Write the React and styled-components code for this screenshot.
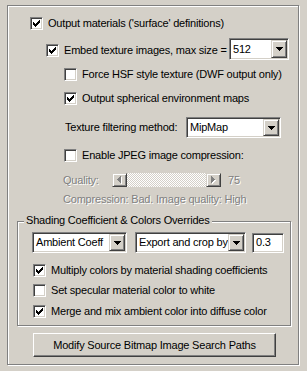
import React from 'react';
import styled, { createGlobalStyle } from 'styled-components';

const Global = createGlobalStyle`
  html, body { margin: 0; padding: 0; background: #d4d0c8; }
  body {
    font-family: "Liberation Sans", Arial, sans-serif;
    font-size: 11px;
    letter-spacing: -0.2px;
    color: #000;
    width: 307px;
    height: 371px;
    overflow: hidden;
  }
  * { box-sizing: border-box; }
`;

const Frame = styled.div`
  margin: 5px 0 0 7px;
  width: 292px;
  height: 360px;
  border: 1px solid #808080;
  box-shadow: inset 1px 1px 0 #fff, 1px 1px 0 #fff;
  display: flex;
  flex-direction: column;
`;

const Row = styled.div`
  display: flex;
  align-items: center;
  flex-shrink: 0;
  height: ${(p) => p.$h}px;
  margin-top: ${(p) => p.$mt}px;
  padding-left: ${(p) => p.$indent}px;
  padding-right: ${(p) => p.$pr || 0}px;
  white-space: nowrap;
  line-height: 13px;
`;

const CheckLabel = styled.label`
  display: flex;
  align-items: center;
  gap: 5px;
  height: 13px;
  line-height: 13px;
  white-space: nowrap;
  align-self: ${(p) => (p.$mt !== undefined ? 'flex-start' : 'center')};
  margin-top: ${(p) => p.$mt || 0}px;
`;

const Box = styled.span`
  width: 13px;
  height: 13px;
  flex-shrink: 0;
  background: #fff;
  border: 1px solid;
  border-color: #808080 #fff #fff #808080;
  box-shadow: inset 1px 1px 0 #404040, inset -1px -1px 0 #d4d0c8;
  padding: 2px 0 0 2px;
  display: flex;
  align-items: flex-start;
  svg { display: block; }
`;

const Text = styled.span`
  color: ${(p) => (p.$disabled ? '#808080' : '#000')};
  text-shadow: ${(p) => (p.$disabled ? '1px 1px 0 #fff' : 'none')};
  width: ${(p) => (p.$w ? `${p.$w}px` : 'auto')};
  margin-left: ${(p) => p.$ml || 0}px;
  flex-shrink: 0;
`;

const Combo = styled.div`
  width: ${(p) => p.$w}px;
  height: ${(p) => p.$h || 21}px;
  margin-left: ${(p) => (p.$auto ? 'auto' : `${p.$ml || 0}px`)};
  flex-shrink: 0;
  background: #fff;
  border: 1px solid;
  border-color: #808080 #fff #fff #808080;
  box-shadow: inset 1px 1px 0 #404040, inset -1px -1px 0 #d4d0c8;
  padding: 1px;
  display: flex;
  align-items: stretch;
`;

const ComboValue = styled.span`
  flex: 1;
  overflow: hidden;
  padding-left: 2px;
  display: flex;
  align-items: center;
`;

const RaisedBtn = styled.span`
  width: ${(p) => p.$w || 16}px;
  flex-shrink: 0;
  background: #d4d0c8;
  border: 1px solid;
  border-color: #d4d0c8 #404040 #404040 #d4d0c8;
  box-shadow: inset 1px 1px 0 #fff, inset -1px -1px 0 #808080;
  display: flex;
  align-items: center;
  justify-content: center;
  svg { display: block; }
`;

const Scroll = styled.div`
  display: flex;
  width: 109px;
  height: 14px;
  flex-shrink: 0;
`;

const Track = styled.span`
  flex: 1;
  background-color: #fff;
  background-image: conic-gradient(#fff 25%, #d4d0c8 0 50%, #fff 0 75%, #d4d0c8 0);
  background-size: 2px 2px;
`;

const Group = styled.div`
  position: relative;
  flex-shrink: 0;
  margin: 15px 0 0 9px;
  width: 274px;
  height: 105px;
  border: 1px solid #808080;
  box-shadow: inset 1px 1px 0 #fff, 1px 1px 0 #fff;
  display: flex;
  flex-direction: column;
  padding-top: 10px;
`;

const GroupTitle = styled.span`
  position: absolute;
  left: 6px;
  top: -8px;
  padding: 0 2px;
  line-height: 13px;
  background: #d4d0c8;
  white-space: nowrap;
`;

const PushButton = styled.button`
  flex-shrink: 0;
  margin: 7px 0 0 25px;
  width: 243px;
  height: 24px;
  padding: 0;
  font: inherit;
  letter-spacing: inherit;
  color: #000;
  background: #d4d0c8;
  border: 1px solid;
  border-color: #fff #404040 #404040 #fff;
  box-shadow: inset -1px -1px 0 #808080, inset 1px 1px 0 #d4d0c8;
  white-space: nowrap;
`;

const CheckMark = () => (
  <svg width="7" height="7" viewBox="0 0 7 7" shapeRendering="crispEdges">
    <path
      fill="#000"
      d="M6 0h1v1h-1z M5 1h2v1h-2z M0 2h1v1h-1z M4 2h3v1h-3z M0 3h2v1h-2z M3 3h3v1h-3z M0 4h5v1h-5z M1 5h3v1h-3z M2 6h1v1h-1z"
    />
  </svg>
);

const DownArrow = () => (
  <svg width="7" height="4" viewBox="0 0 7 4" shapeRendering="crispEdges">
    <path fill="#000" d="M0 0h7v1h-7z M1 1h5v1h-5z M2 2h3v1h-3z M3 3h1v1h-1z" />
  </svg>
);

const SideArrow = ({ dir }) => {
  const d =
    dir === 'left'
      ? 'M0 3h1v1h-1z M1 2h1v3h-1z M2 1h1v5h-1z M3 0h1v7h-1z'
      : 'M0 0h1v7h-1z M1 1h1v5h-1z M2 2h1v3h-1z M3 3h1v1h-1z';
  return (
    <svg width="5" height="8" viewBox="0 0 5 8" shapeRendering="crispEdges">
      <g transform="translate(1 1)">
        <path fill="#fff" d={d} />
      </g>
      <path fill="#808080" d={d} />
    </svg>
  );
};

const Check = ({ checked, children, mt }) => (
  <CheckLabel $mt={mt}>
    <Box>{checked && <CheckMark />}</Box>
    <Text>{children}</Text>
  </CheckLabel>
);

const Dropdown = ({ w, h, value, auto, ml }) => (
  <Combo $w={w} $h={h} $auto={auto} $ml={ml}>
    <ComboValue>{value}</ComboValue>
    <RaisedBtn>
      <DownArrow />
    </RaisedBtn>
  </Combo>
);

export default function App() {
  return (
    <>
      <Global />
      <Frame>
        <Row $h={13} $mt={11} $indent={22}>
          <Check checked>Output materials ('surface' definitions)</Check>
        </Row>
        <Row $h={22} $mt={8} $indent={38} $pr={9}>
          <Check checked mt={6}>Embed texture images, max size =</Check>
          <Dropdown w={60} h={22} value="512" auto />
        </Row>
        <Row $h={13} $mt={8} $indent={56}>
          <Check>Force HSF style texture (DWF output only)</Check>
        </Row>
        <Row $h={13} $mt={11} $indent={56}>
          <Check checked>Output spherical environment maps</Check>
        </Row>
        <Row $h={21} $mt={12} $indent={57} $pr={17}>
          <Text>Texture filtering method:</Text>
          <Dropdown w={95} h={21} value="MipMap" auto />
        </Row>
        <Row $h={13} $mt={11} $indent={56}>
          <Check>Enable JPEG image compression:</Check>
        </Row>
        <Row $h={14} $mt={11} $indent={55}>
          <Text $disabled $w={49}>Quality:</Text>
          <Scroll>
            <RaisedBtn $w={15}>
              <SideArrow dir="left" />
            </RaisedBtn>
            <Track />
            <RaisedBtn $w={15}>
              <SideArrow dir="right" />
            </RaisedBtn>
          </Scroll>
          <Text $disabled $ml={7}>75</Text>
        </Row>
        <Row $h={13} $mt={6} $indent={55}>
          <Text $disabled>Compression: Bad. Image quality: High</Text>
        </Row>
        <Group>
          <GroupTitle>Shading Coefficient &amp; Colors Overrides</GroupTitle>
          <Row $h={21} $mt={0} $indent={14}>
            <Dropdown w={95} h={21} value="Ambient Coeff" />
            <Dropdown w={111} h={21} value="Export and crop by" ml={8} />
            <Combo $w={32} $h={20} $ml={6}>
              <ComboValue>0.3</ComboValue>
            </Combo>
          </Row>
          <Row $h={13} $mt={11} $indent={15}>
            <Check checked>Multiply colors by material shading coefficients</Check>
          </Row>
          <Row $h={13} $mt={7} $indent={15}>
            <Check>Set specular material color to white</Check>
          </Row>
          <Row $h={13} $mt={8} $indent={15}>
            <Check checked>Merge and mix ambient color into diffuse color</Check>
          </Row>
        </Group>
        <PushButton type="button">Modify Source Bitmap Image Search Paths</PushButton>
      </Frame>
    </>
  );
}
